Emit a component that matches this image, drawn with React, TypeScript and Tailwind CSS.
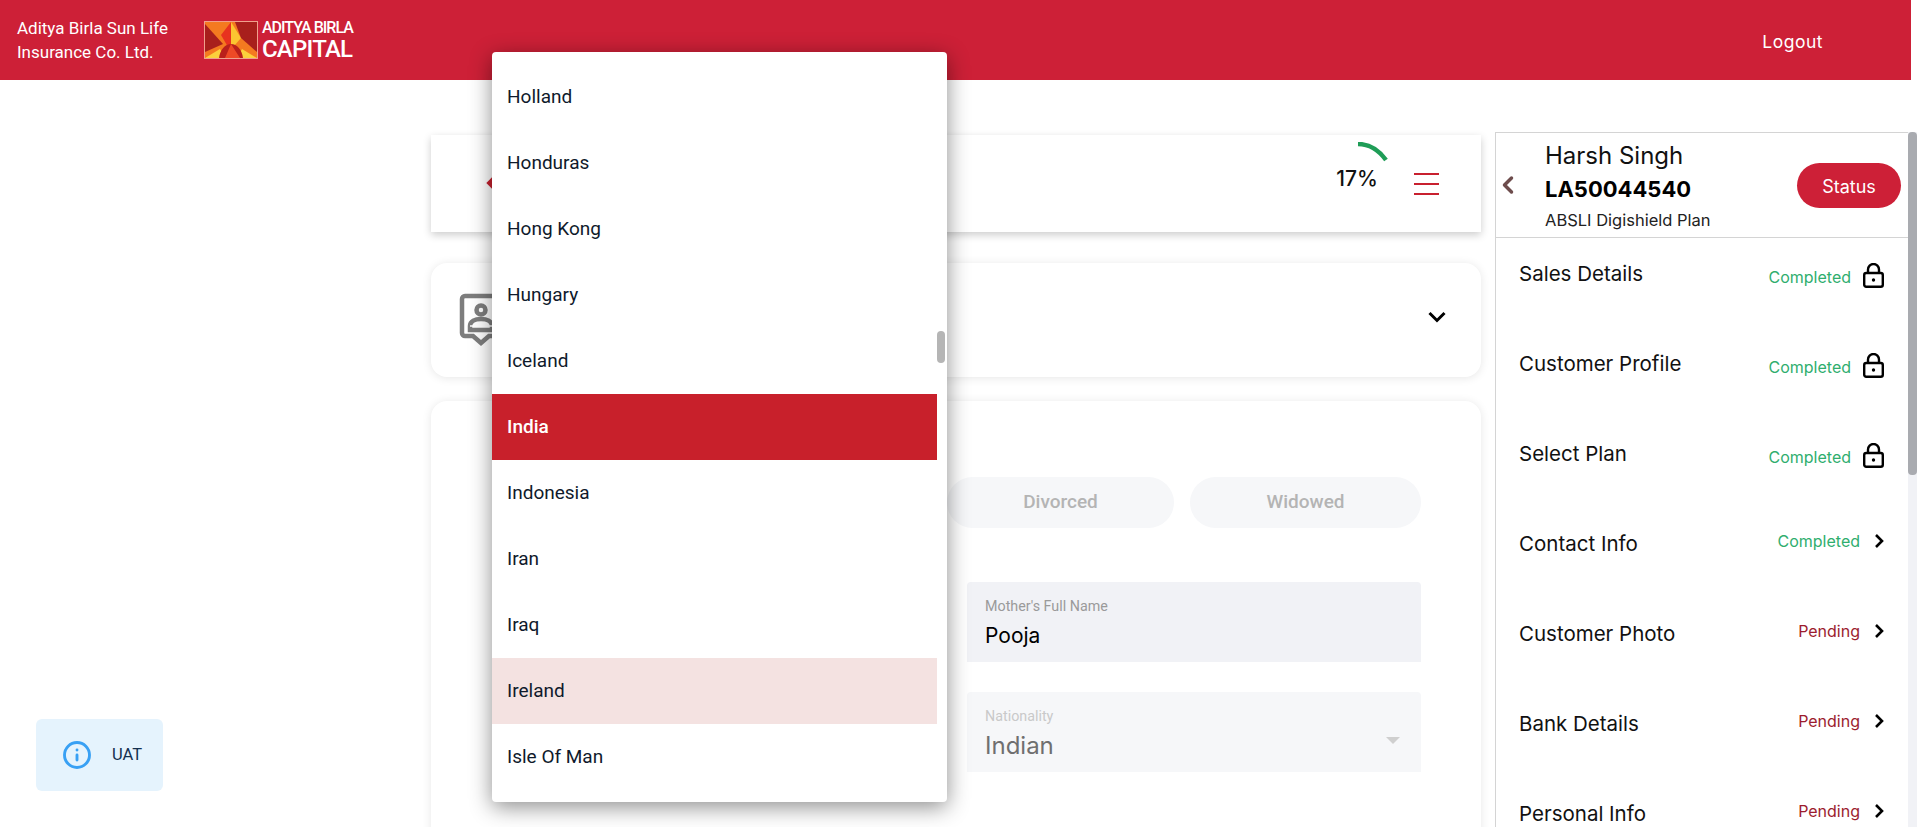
import { ChevronLeft, Info } from 'lucide-react';

const din = { fontFamily: 'Roboto, "Noto Sans", sans-serif' };
const pub = { fontFamily: 'Inter, "Noto Sans", sans-serif' };

const countries = ['Holland', 'Honduras', 'Hong Kong', 'Hungary', 'Iceland', 'India', 'Indonesia', 'Iran', 'Iraq', 'Ireland', 'Isle Of Man'];

const steps = [
  { name: 'Sales Details', status: 'Completed', locked: true },
  { name: 'Customer Profile', status: 'Completed', locked: true },
  { name: 'Select Plan', status: 'Completed', locked: true },
  { name: 'Contact Info', status: 'Completed', locked: false },
  { name: 'Customer Photo', status: 'Pending', locked: false },
  { name: 'Bank Details', status: 'Pending', locked: false },
  { name: 'Personal Info', status: 'Pending', locked: false },
];

function Logo() {
  return (
    <svg width="54" height="38" viewBox="0 0 54 38" className="shrink-0">
      <rect width="54" height="38" fill="#f47a20" />
      <path d="M1 3 19 23 1 31z" fill="#a81f1c" />
      <path d="M27 1 17 14l7 12 3-1z" fill="#e8321f" />
      <path d="M27 1l10 16-7 8-3 0z" fill="#fbc531" />
      <path d="M31 1h22v30L37 17z" fill="#a81f1c" />
      <path d="M1 37l15-9 5 9z" fill="#fbd13c" />
      <path d="M53 37l-15-9-5 9z" fill="#fbd13c" />
      <path d="M27 23c-6 0-11 6-12 14h24c-1-8-6-14-12-14z" fill="#b9201b" />
      <path d="M27 23l-6 14h6zM27 23l9 14h-9z" fill="#ee4a26" />
      <rect x=".5" y=".5" width="53" height="37" fill="none" stroke="#f0a08c" />
    </svg>
  );
}

function ContactCardIcon() {
  return (
    <svg width="44" height="54" viewBox="0 0 44 54" fill="none" stroke="#7d7d7d" strokeWidth="4.5">
      <path d="M6 3h32a3 3 0 0 1 3 3v34a3 3 0 0 1-3 3h-8l-8 7-8-7H6a3 3 0 0 1-3-3V6a3 3 0 0 1 3-3z" />
      <circle cx="22" cy="17" r="4.5" />
      <path d="M11 37v-4c0-5 5-7 11-7s11 2 11 7v4z" />
      <path d="M11 33h22" stroke="#fff" strokeWidth="1.5" />
    </svg>
  );
}

function Lock() {
  return (
    <svg width="21" height="25" viewBox="0 0 21 25" fill="none" stroke="#000" strokeWidth="2.4" className="shrink-0">
      <rect x="1.2" y="10" width="18.6" height="13.8" rx="2" />
      <path d="M5 10V6.5a5.5 5.5 0 0 1 11 0V10" />
      <circle cx="10.5" cy="17" r="1.7" fill="#000" stroke="none" />
    </svg>
  );
}

function Arrow() {
  return (
    <svg width="10" height="14" viewBox="0 0 10 14" fill="none" stroke="#000" strokeWidth="2.6" className="shrink-0">
      <path d="M2 1l6 6-6 6" />
    </svg>
  );
}

export default function App() {
  return (
    <div className="relative h-[827px] w-[1920px] overflow-hidden bg-white" style={din}>
      <header className="flex h-20 w-[1911px] items-center bg-[#cd2037] pl-[17px] pr-[88px] text-white">
        <div className="w-[187px] text-[17px] leading-6">
          <div>Aditya Birla Sun Life</div>
          <div>Insurance Co. Ltd.</div>
        </div>
        <Logo />
        <div className="ml-[4px] flex flex-col font-medium">
          <span className="text-[16px] leading-[18px] tracking-[-1px]">ADITYA BIRLA</span>
          <span className="text-[24px] leading-[25px] tracking-[-0.8px]">CAPITAL</span>
        </div>
        <span className="ml-auto pt-[4px] text-[17.5px] tracking-[0.5px]" style={pub}>Logout</span>
      </header>

      <div className="flex pl-[431px]">
        <main className="flex w-[1050px] flex-col pt-[55px]">
          <section className="relative flex h-[97px] items-center justify-end bg-white pr-[42px] shadow-[0_3px_8px_rgba(0,0,0,0.2)]">
            <div className="absolute left-[57px] top-[44px] h-[8px] w-[8px] rotate-45 bg-[#c8202f]" />
            <div className="relative mb-[33px] mr-[32px] flex h-[50px] w-[50px] items-end justify-center">
              <svg width="32" height="20" viewBox="0 0 32 20" className="absolute left-[25px] top-[0px]" fill="none">
                <path d="M1 2c11 0 20 5 28 16" stroke="#1f9d57" strokeWidth="4.5" />
              </svg>
              <span className="text-[21px] font-medium leading-[26px] text-[#111]" style={pub}>17%</span>
            </div>
            <div className="flex w-[25px] flex-col gap-[8px]">
              <div className="h-[2px] bg-[#c8202f]" />
              <div className="h-[2px] bg-[#c8202f]" />
              <div className="h-[2px] bg-[#c8202f]" />
            </div>
          </section>

          <section className="mt-[31px] flex h-[114px] items-center justify-between rounded-2xl bg-white pl-[28px] pr-[35px] shadow-[0_1px_10px_rgba(0,0,0,0.1)]">
            <ContactCardIcon />
            <svg width="18" height="12" viewBox="0 0 18 12" fill="none" stroke="#000" strokeWidth="3" className="mb-[6px]">
              <path d="M1.5 2 9 9.5 16.5 2" />
            </svg>
          </section>

          <section className="mt-[24px] h-[500px] rounded-t-2xl bg-white pl-[536px] pr-[60px] pt-[76px] shadow-[0_1px_10px_rgba(0,0,0,0.1)]">
            <div className="flex gap-[16px]">
              <div className="-ml-[20px] flex h-[51px] w-[227px] items-center justify-center rounded-full bg-[#f6f7f9] pb-[1px] text-[19px] font-medium text-[#b4b4b4]">Divorced</div>
              <div className="flex h-[51px] w-[231px] items-center justify-center rounded-full bg-[#f6f7f9] pb-[1px] text-[19px] font-medium text-[#b4b4b4]">Widowed</div>
            </div>
            <div className="mt-[54px] h-[80px] rounded-t bg-[#f1f2f6] pl-[18px] pt-[15px]">
              <div className="text-[14.3px] leading-[18px] text-[#9a9a9a]">Mother's Full Name</div>
              <div className="mt-[7px] text-[21px] leading-[28px] text-black" style={pub}>Pooja</div>
            </div>
            <div className="relative mt-[30px] h-[80px] rounded-t bg-[#f6f7f9] pl-[18px] pt-[15px]">
              <div className="text-[14.3px] leading-[18px] text-[#c9c9c9]">Nationality</div>
              <div className="mt-[5px] text-[24px] leading-[32px] text-[#6f6f6f]" style={pub}>Indian</div>
              <div className="absolute right-[21px] top-[45px] h-0 w-0 border-x-[7px] border-t-[7px] border-x-transparent border-t-[#cfcfcf]" />
            </div>
          </section>
        </main>

        <aside className="ml-[14px] mt-[52px] flex h-[695px] w-[422px] overflow-hidden" style={pub}>
          <div className="w-[413px] border-l border-t border-[#d4d4d4]">
            <div className="flex h-[105px] items-center border-b border-[#d4d4d4] pr-[7px]">
              <ChevronLeft size={28} strokeWidth={3} color="#6d4c4c" className="-ml-[2px] shrink-0" />
              <div className="ml-[23px] flex-1 pt-[2px]">
                <div className="text-[24px] leading-[32px] text-[#111]">Harsh Singh</div>
                <div className="text-[22px] font-bold leading-[34px] text-black">LA50044540</div>
                <div className="mt-[2px] text-[16.5px] leading-[24px] text-[#222]">ABSLI Digishield Plan</div>
              </div>
              <div className="flex h-[45px] w-[104px] items-center justify-center rounded-full bg-[#cd2037] pt-[3px] text-[18px] text-white">Status</div>
            </div>
            <div className="pl-[23px] pr-[24px]">
              {steps.map((s) => (
                <div key={s.name} className="flex h-[90px] items-start justify-between pt-[21px]">
                  <span className="text-[20.5px] leading-[30px] text-[#111]">{s.name}</span>
                  {s.locked ? (
                    <span className="mt-[4px] flex h-[25px] items-center gap-[12px]">
                      <span className="pt-[3px] text-[16px] text-[#2fae6e]">{s.status}</span>
                      <Lock />
                    </span>
                  ) : (
                    <span className="mt-[2px] flex h-[20px] items-center gap-[14px]">
                      <span className={`text-[16px] ${s.status === 'Completed' ? 'text-[#2fae6e]' : 'text-[#9c1c2e]'}`}>{s.status}</span>
                      <Arrow />
                    </span>
                  )}
                </div>
              ))}
            </div>
          </div>
          <div className="h-full w-[9px] bg-[#f1f2f6]">
            <div className="h-[343px] rounded-[4px] bg-[#a9abb0]" />
          </div>
        </aside>
      </div>

      {/* country dropdown */}
      <div className="absolute left-[492px] top-[52px] flex h-[750px] w-[455px] overflow-hidden rounded bg-white shadow-[0_5px_22px_rgba(0,0,0,0.45)]">
        <div className="flex-1 pt-[12px]">
          {countries.map((c) => (
            <div
              key={c}
              className={`flex h-[66px] items-center pl-[15px] pt-[1px] text-[19px] ${
                c === 'India' ? 'bg-[#c8202b] font-medium text-white' : c === 'Ireland' ? 'bg-[#f4e2e1] text-[#0f1a2b]' : 'text-[#0f1a2b]'
              }`}
            >
              {c}
            </div>
          ))}
        </div>
        <div className="relative w-[10px]">
          <div className="absolute left-0 top-[279px] h-[32px] w-[8px] rounded-sm bg-[#b5b5b5]" />
        </div>
      </div>

      <div className="absolute left-[36px] top-[719px] flex h-[72px] w-[127px] items-center rounded-md bg-[#e5f3fd] pl-[26px]">
        <Info size={30} strokeWidth={2.3} color="#38a0f4" />
        <span className="ml-[20px] text-[16.5px] text-[#14304f]">UAT</span>
      </div>
    </div>
  );
}
